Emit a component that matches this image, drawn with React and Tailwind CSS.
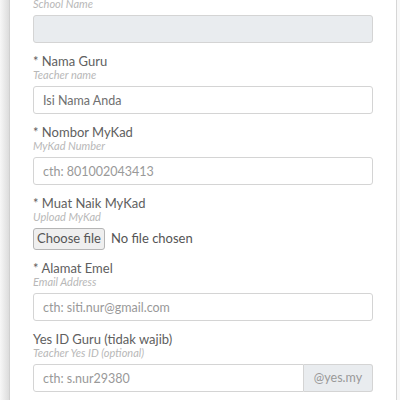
import React from 'react';

const fields = [
  { label: '* Nama Guru', sub: 'Teacher name', value: 'Isi Nama Anda' },
  { label: '* Nombor MyKad', sub: 'MyKad Number', placeholder: 'cth: 801002043413' },
  { label: '* Muat Naik MyKad', sub: 'Upload MyKad', file: true },
  { label: '* Alamat Emel', sub: 'Email Address', placeholder: 'cth: siti.nur@gmail.com' },
  { label: 'Yes ID Guru (tidak wajib)', sub: 'Teacher Yes ID (optional)', placeholder: 'cth: s.nur29380', addon: '@yes.my' },
];

const Sub = ({ children }) => (
  <div className="text-[11px] leading-[12px] italic text-[#b8b8b8] mb-[5px]">{children}</div>
);

const Field = ({ f }) => (
  <div className="mb-[10px]">
    <div className="text-[13px] leading-[16px] text-[#606060]">{f.label}</div>
    <Sub>{f.sub}</Sub>
    {f.file ? (
      <div className="flex items-center h-[22px]">
        <div className="h-[22px] w-[72px] flex items-center justify-center bg-[#efefef] border border-[#b5b5b5] rounded-[3px] text-[13px] text-[#555]">
          Choose file
        </div>
        <span className="ml-[6px] text-[13px] text-[#555]">No file chosen</span>
      </div>
    ) : f.addon ? (
      <div className="flex h-[28px]">
        <input
          readOnly
          placeholder={f.placeholder}
          className="flex-1 min-w-0 h-full border border-[#d4d4d4] rounded-l-[3px] px-[9px] text-[12.5px] text-[#666] placeholder:text-[#999] outline-none"
        />
        <div className="w-[69px] h-full flex items-center justify-center bg-[#e9ecef] border border-l-0 border-[#d4d4d4] rounded-r-[3px] text-[12.5px] text-[#999]">
          {f.addon}
        </div>
      </div>
    ) : (
      <input
        readOnly
        value={f.value}
        placeholder={f.placeholder}
        className="w-full h-[28px] border border-[#d4d4d4] rounded-[3px] px-[9px] text-[12.5px] text-[#707070] placeholder:text-[#999] outline-none"
      />
    )}
  </div>
);

export default function App() {
  return (
    <div className="w-[400px] h-[400px] overflow-hidden flex bg-white" style={{ fontFamily: 'Lato, "Open Sans", sans-serif' }}>
      <div className="w-[10px] h-full bg-gradient-to-r from-[#f7f7f7] to-[#dcdcdc] border-r border-[#d0d0d0]" />
      <div className="flex-1 h-full bg-white border-r border-[#d6d6d6] pl-[23px] pr-[23px]">
        <div className="-mt-[2px]">
          <Sub>School Name</Sub>
          <div className="h-[28px] bg-[#e9ecef] border border-[#d4d4d4] rounded-[3px] mb-[10px]" />
          {fields.map((f) => (
            <Field key={f.label} f={f} />
          ))}
        </div>
      </div>
      <div className="w-[3px] h-full bg-[#f8f8f8]" />
    </div>
  );
}
